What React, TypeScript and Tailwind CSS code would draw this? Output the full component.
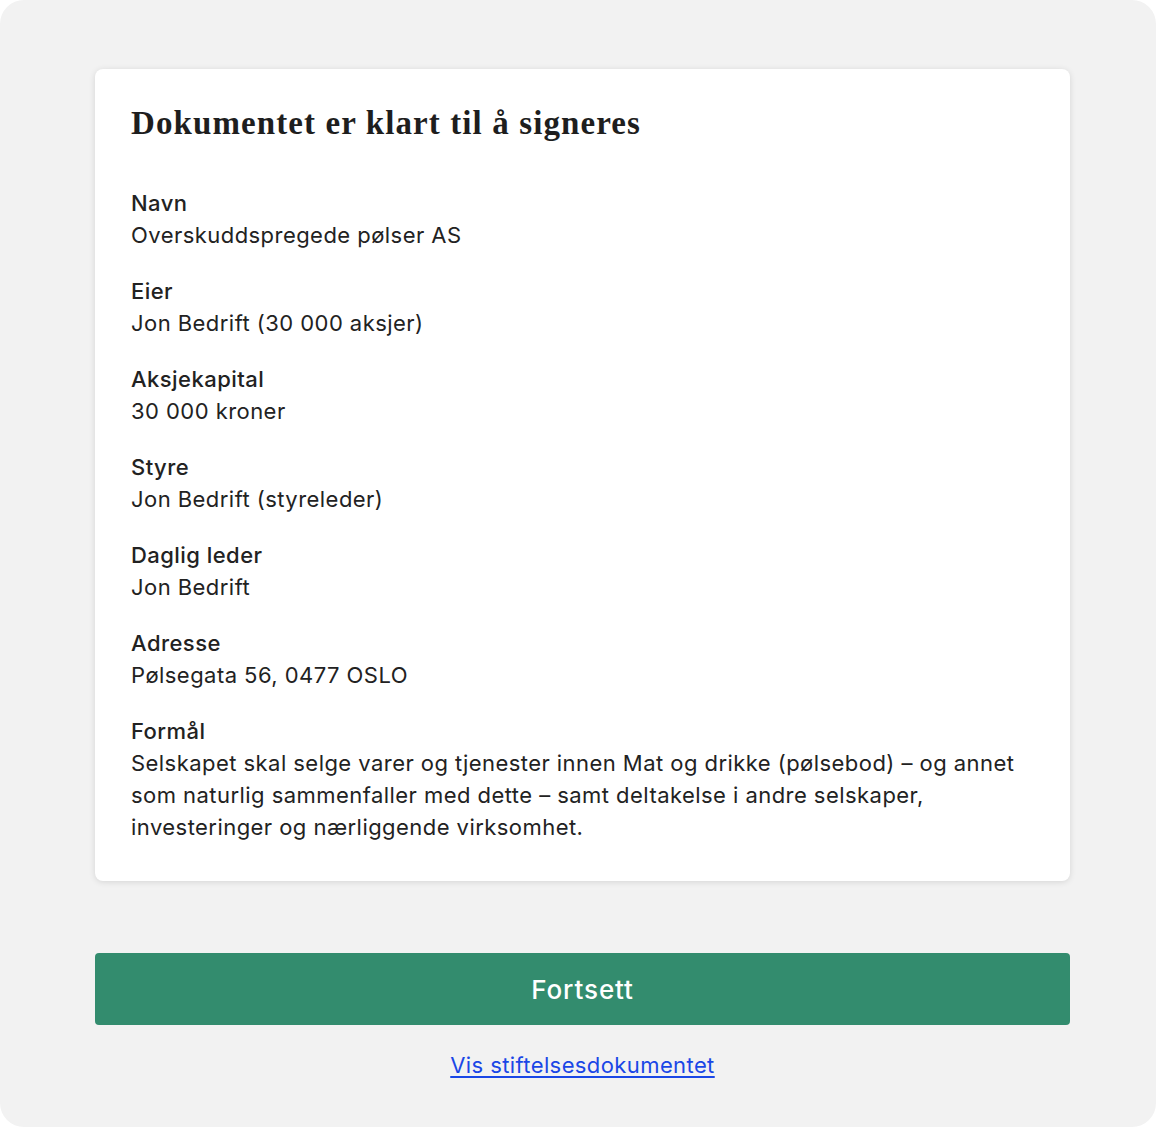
export default function App() {
  const rows: [string, string][] = [
    ["Navn", "Overskuddspregede pølser AS"],
    ["Eier", "Jon Bedrift (30 000 aksjer)"],
    ["Aksjekapital", "30 000 kroner"],
    ["Styre", "Jon Bedrift (styreleder)"],
    ["Daglig leder", "Jon Bedrift"],
    ["Adresse", "Pølsegata 56, 0477 OSLO"],
    [
      "Formål",
      "Selskapet skal selge varer og tjenester innen Mat og drikke (pølsebod) – og annet som naturlig sammenfaller med dette – samt deltakelse i andre selskaper, investeringer og nærliggende virksomhet.",
    ],
  ];
  return (
    <div className="bg-white w-[1156px] h-[1127px]">
      <div
        className="w-[1156px] h-[1127px] rounded-[24px] bg-[#f2f2f2] pt-[69px] pl-[95px] pr-[86px] text-[#222222]"
        style={{ fontFamily: "Inter, 'Noto Sans', sans-serif" }}
      >
        <div className="bg-white rounded-[8px] shadow-[0_1px_6px_rgba(0,0,0,0.12)] pt-[36px] pb-[38px] px-[36px]">
          <h1
            className="text-[33px] leading-[36px] font-bold tracking-[1.1px] text-[#1e1e1e] mb-[46px]"
            style={{ fontFamily: "'Liberation Serif', 'DejaVu Serif', serif" }}
          >
            Dokumentet er klart til å signeres
          </h1>
          <div className="flex flex-col gap-[24px] text-[22px] leading-[32px] tracking-[0.45px]">
            {rows.map(([label, value]) => (
              <div key={label}>
                <div className="font-medium">{label}</div>
                <div className="font-normal pr-[10px]">{value}</div>
              </div>
            ))}
          </div>
        </div>
        <button className="mt-[72px] w-full h-[72px] rounded-[4px] bg-[#338c6e] text-white text-[26px] font-medium tracking-[0.9px]">
          Fortsett
        </button>
        <div className="mt-[24px] text-center text-[22px] leading-[32px] tracking-[0.4px]">
          <a href="#" className="text-[#1a47e6] underline underline-offset-[3px]">
            Vis stiftelsesdokumentet
          </a>
        </div>
      </div>
    </div>
  );
}
